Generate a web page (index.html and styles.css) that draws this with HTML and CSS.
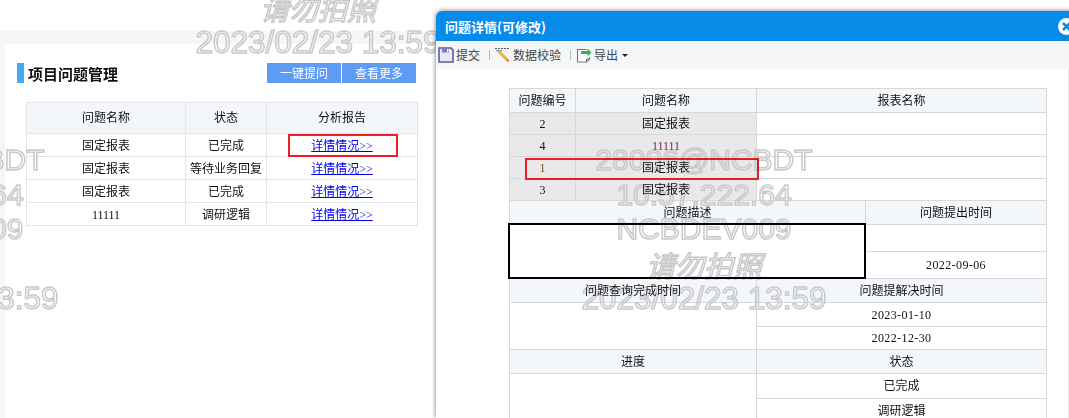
FILE: index.html
```html
<!DOCTYPE html>
<html lang="zh">
<head>
<meta charset="utf-8">
<title>项目问题管理</title>
<link rel="stylesheet" href="styles.css">
</head>
<body>
<div class="screen">
  <section class="backdrop">
    <div class="panel">
      <header class="panel-head">
        <h2 class="panel-title">项目问题管理</h2>
        <div class="panel-actions">
          <button class="action">一键提问</button>
          <button class="action">查看更多</button>
        </div>
      </header>
      <table class="grid issues">
        <colgroup><col class="i1"><col class="i2"><col class="i3"></colgroup>
        <thead><tr class="tall"><th>问题名称</th><th>状态</th><th>分析报告</th></tr></thead>
        <tbody>
          <tr><td>固定报表</td><td>已完成</td><td><a href="#">详情情况&gt;&gt;</a></td></tr>
          <tr><td>固定报表</td><td>等待业务回复</td><td><a href="#">详情情况&gt;&gt;</a></td></tr>
          <tr><td>固定报表</td><td>已完成</td><td><a href="#">详情情况&gt;&gt;</a></td></tr>
          <tr><td>11111</td><td>调研逻辑</td><td><a href="#">详情情况&gt;&gt;</a></td></tr>
        </tbody>
      </table>
      <div class="mark mark-link"></div>
    </div>
    <div class="wm wm-top"><i>请勿拍照</i><span class="wm-date">2023/02/23 13:59</span></div>
    <div class="wm wm-left"><span>28006@NCBDT</span><span>10.57.222.64</span><span>NCBDEV009</span><i>请勿拍照</i><span class="wm-date">2023/02/23 13:59</span></div>
  </section>

  <section class="dialog">
    <header class="dialog-title">
      <h1>问题详情(可修改)</h1>
      <svg class="close" width="17" height="17" viewBox="0 0 17 17"><circle cx="8.500" cy="8.500" r="8.500" fill="#fff"/><path d="M5 5l7 7M12 5l-7 7" stroke="#068be9" stroke-width="2.600"/></svg>
    </header>
    <nav class="toolbar">
      <span class="tool">
        <svg width="16" height="16" viewBox="0 0 16 16"><path d="M1 1h12l2 2v12H1z" fill="#e8e8f2" stroke="#5c5c98" stroke-width="1.600"/><path d="M4 1.500h7v4H4z" fill="#7d7db0"/><path d="M9 2h1.500v3H9z" fill="#fff"/></svg>提交</span>
      <span class="sep"></span>
      <span class="tool">
        <svg width="16" height="16" viewBox="0 0 16 16"><path d="M0 1.500h15" stroke="#555" stroke-dasharray="2 1"/><path d="M1 3.500h6" stroke="#3ba0d8"/><path d="M2 4l2-1 9 9-1.500 2z" fill="#f5b942" stroke="#d98a1e" stroke-width=".6"/><path d="M11.500 14l1.500-2 1.500 3z" fill="#ee5a3a"/></svg>数据校验</span>
      <span class="sep"></span>
      <span class="tool">
        <svg width="16" height="16" viewBox="0 0 16 16"><path d="M13.500 10v2l-3 3h-9V2.500h9" fill="#fff" stroke="#777" stroke-width="1.100"/><path d="M10.500 15v-3h3" fill="none" stroke="#777"/><path d="M5 4h6.500V1.500l4 4-4 4V7H5z" fill="#3fb05a"/></svg>导出<span class="caret"></span></span>
    </nav>
    <div class="dialog-body">
      <div class="sheet">
        <table class="grid form">
          <colgroup><col class="f1"><col class="f2"><col class="f3"><col class="f4"></colgroup>
          <tr class="h24"><th>问题编号</th><th>问题名称</th><th colspan="2">报表名称</th></tr>
          <tr><td class="shade">2</td><td class="shade">固定报表</td><td colspan="2"></td></tr>
          <tr><td class="shade">4</td><td class="shade crimson">11111</td><td colspan="2"></td></tr>
          <tr><td class="shade brown">1</td><td class="shade">固定报表</td><td colspan="2"></td></tr>
          <tr><td class="shade">3</td><td class="shade">固定报表</td><td colspan="2"></td></tr>
          <tr class="h24"><th colspan="3">问题描述</th><th>问题提出时间</th></tr>
          <tr class="h27"><td colspan="3" rowspan="2"></td><td></td></tr>
          <tr class="h27"><td class="date">2022-09-06</td></tr>
          <tr class="h24"><th colspan="2">问题查询完成时间</th><th colspan="2">问题提解决时间</th></tr>
          <tr class="h24d"><td colspan="2" rowspan="2"></td><td colspan="2" class="date">2023-01-10</td></tr>
          <tr class="h23d"><td colspan="2" class="date">2022-12-30</td></tr>
          <tr class="h24"><th colspan="2">进度</th><th colspan="2">状态</th></tr>
          <tr class="h25d"><td colspan="2" rowspan="2"></td><td colspan="2">已完成</td></tr>
          <tr class="h24d"><td colspan="2">调研逻辑</td></tr>
        </table>
        <div class="mark mark-row"></div>
        <div class="redact"></div>
      </div>
    </div>
    <div class="wm wm-center"><span>28006@NCBDT</span><span>10.57.222.64</span><span>NCBDEV009</span><i>请勿拍照</i><span class="wm-date">2023/02/23 13:59</span></div>
  </section>
</div>
</body>
</html>
```
FILE: styles.css
```css
* { box-sizing: border-box; }
html, body { margin: 0; height: 100%; background: #fff; overflow: hidden; }
body { font: 12px/1 "Noto Sans CJK SC", "Noto Sans", sans-serif; color: #111; }
.screen { display: flex; width: 1069px; height: 418px; overflow: hidden; }

.backdrop { position: relative; flex: 0 0 436px; min-width: 0; padding-top: 31px; }
.panel { position: relative; height: 387px; background: #fff; border-top: 13px solid #f5f6f8; border-left: 5px solid #f5f6f8; padding: 19px 0 0 12px; }
.panel-head { display: flex; align-items: center; justify-content: space-between; width: 400px; height: 20px; border-left: 7px solid #3fa9f5; padding-left: 4px; }
.panel-title { margin: 0; font-size: 15px; font-weight: 700; }
.panel-actions { display: flex; gap: 1px; margin-right: 1px; }
.action { width: 74px; height: 20px; padding: 0; border: 0; background: #5e9bf5; color: #fff; font: inherit; }

.grid { border-collapse: collapse; table-layout: fixed; font-family: "Liberation Serif", "Noto Sans CJK SC", serif; }
.grid th, .grid td { border: 1px solid #e3e5e8; padding: 0; text-align: center; font-weight: 400; height: 23px; }
.grid th { background: #f3f7fc; }
.issues { width: 391px; margin: 19px 0 0 9px; }
.issues .i1 { width: 159px; }
.issues .i2 { width: 81px; }
.issues .i3 { width: 151px; }
.issues .tall th { height: 31px; }
.issues td { padding-top: 1px; }
.issues a { color: #00e; }

.mark { position: absolute; border: 2px solid #ee1c25; }
.mark-link { left: 283px; top: 90px; width: 110px; height: 23px; }

.dialog { position: relative; flex: 0 0 660px; margin-top: 11px; background: #fff; border-radius: 6px 0 0 0; box-shadow: 0 0 5px rgba(0,0,0,.55); }
.dialog-title { display: flex; align-items: center; justify-content: space-between; height: 30px; padding: 0 21px 0 9px; background: #068be9; border-radius: 6px 0 0 0; color: #fff; }
.dialog-title h1 { margin: 0; font-size: 13px; font-weight: 700; }
.close { flex: none; }
.toolbar { display: flex; align-items: center; height: 28px; padding-left: 2px; background: #f5f6f8; color: #444; }
.tool { display: flex; align-items: center; gap: 2px; }
.sep { width: 1px; height: 10px; margin: 0 5px 0 9px; background: #bbb; }
.caret { width: 0; height: 0; margin-left: 2px; border: 3px solid transparent; border-top: 3px solid #222; border-bottom: 0; }

.dialog-body { width: 633px; height: 349px; padding: 19px 0 0 73px; border-right: 1px solid #e6e6e6; }
.sheet { position: relative; width: 537px; }
.form { width: 537px; }
.form .f1 { width: 66px; }
.form .f2 { width: 181px; }
.form .f3 { width: 109px; }
.form .f4 { width: 181px; }
.form th, .form td { border-color: #d6d8da; height: 22px; }
.form tr.h24 th { height: 24px; }
.form tr.h27 td { height: 27px; }
.form tr.h23d td { height: 23px; }
.form tr.h24d td { height: 24px; }
.form tr.h25d td { height: 25px; }
.date { letter-spacing: .4px; }
.shade { background: #e9e9e9; }
.crimson { color: #8a2252; }
.brown { color: #7a4a1e; }
.mark-row { left: 16px; top: 70px; width: 234px; height: 22px; }
.redact { position: absolute; left: -1px; top: 135px; width: 358px; height: 56px; background: #fff; border: 2px solid #000; }

.wm { position: absolute; display: flex; flex-direction: column; align-items: center; width: 300px; pointer-events: none; mix-blend-mode: darken; font-family: "Liberation Sans", sans-serif; font-size: 30px; line-height: 34.500px; color: transparent; -webkit-text-stroke: 1.500px #c9c9c9; white-space: nowrap; }
.wm span, .wm i { display: block; }
.wm i { font-family: "Noto Sans CJK SC", sans-serif; font-size: 29px; }
.wm .wm-date { font-size: 31.500px; }
.wm-top { left: 168px; top: -10px; }
.wm-left { left: -214px; top: 143px; }
.wm-center { left: 118px; top: 132px; }
```
